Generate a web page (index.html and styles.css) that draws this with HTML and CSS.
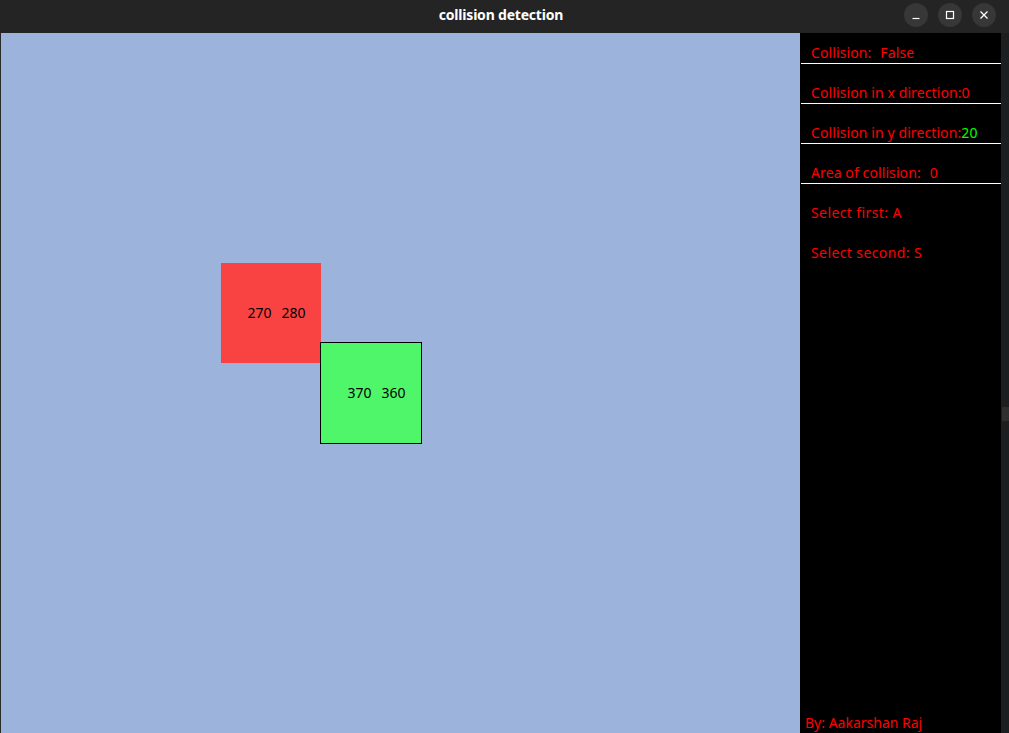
FILE: index.html
```html
<!DOCTYPE html>
<html lang="en">
<head>
<meta charset="utf-8">
<title>collision detection</title>
<link rel="stylesheet" href="styles.css">
</head>
<body>
<div class="window">
  <header class="titlebar">
    <div class="title">collision detection</div>
    <div class="controls">
      <span class="btn"><svg width="10" height="10" viewBox="0 0 10 10"><path d="M1.5 8.5h7" stroke="#fff" stroke-width="1.2"/></svg></span>
      <span class="btn"><svg width="10" height="10" viewBox="0 0 10 10"><rect x="1.5" y="1.5" width="7" height="7" fill="none" stroke="#fff" stroke-width="1.2"/></svg></span>
      <span class="btn"><svg width="10" height="10" viewBox="0 0 10 10"><path d="M1.5 1.5l7 7M8.5 1.5l-7 7" stroke="#fff" stroke-width="1.3"/></svg></span>
    </div>
  </header>
  <main class="content">
    <div class="edge"></div>
    <section class="canvas">
      <div class="box box-red"><span>270</span><span>280</span></div>
      <div class="box box-green"><span>370</span><span>360</span></div>
    </section>
    <aside class="sidebar">
      <div class="row row-first">Collision:<span class="gap"></span>False</div>
      <div class="row">Collision in x direction:0</div>
      <div class="row">Collision in y direction:<span class="green">20</span></div>
      <div class="row">Area of collision:<span class="gap"></span>0</div>
      <div class="row plain">Select first: A</div>
      <div class="row plain">Select second: S</div>
      <div class="spacer"></div>
      <div class="credit">By: Aakarshan Raj</div>
    </aside>
    <div class="strip"><div class="thumb"></div></div>
  </main>
</div>
</body>
</html>
```
FILE: styles.css
```css
* { box-sizing: border-box; }
html, body { margin: 0; padding: 0; background: #1c1d1e; }
body { width: 1009px; height: 733px; overflow: hidden; font-family: "Noto Sans", "DejaVu Sans", sans-serif; }
.window { display: flex; flex-direction: column; width: 1009px; height: 733px; }
.titlebar {
  height: 33px; background: #242424; display: flex; align-items: center; justify-content: center;
  position: relative; color: #fff;
}
.title { font-weight: 700; font-size: 14px; letter-spacing: -0.2px; margin-top: -4px; margin-right: 7px; }
.controls { position: absolute; right: 13px; top: 3px; display: flex; gap: 10px; }
.btn { width: 24px; height: 24px; border-radius: 50%; background: #373737; display: flex; align-items: center; justify-content: center; }
.content { flex: 1; display: flex; min-height: 0; }
.edge { width: 1px; background: #2a2a2a; }
.canvas { width: 799px; background: #9cb3dc; position: relative; }
.box {
  position: absolute; width: 100px; height: 100px; display: flex; align-items: center; justify-content: center;
  gap: 10px; font-size: 14px; color: #000; padding-left: 11px; padding-bottom: 2px;
}
.box-red { left: 220px; top: 230px; background: #f94343; }
.box-green { left: 319px; top: 309px; width: 102px; height: 102px; background: #50f66a; border: 1px solid #000; }
.sidebar { width: 201px; background: #000; color: #ff0000; font-size: 14px; display: flex; flex-direction: column; }
.row {
  height: 40px; display: flex; align-items: flex-end; padding: 0 0 2px 10px; line-height: 16px;
  border-bottom: 1px solid #fff; margin-left: 1px; white-space: nowrap; letter-spacing: 0.1px;
}
.row-first { height: 31px; }
.row.plain { border-bottom: none; padding-bottom: 3px; letter-spacing: 0.4px; }
.gap { display: inline-block; width: 9px; }
.green { color: #00ff00; margin-left: 0; }
.spacer { flex: 1; }
.credit { padding: 0 0 2px 5px; line-height: 16px; }
.strip { width: 8px; background: #1c1e1f; position: relative; }
.thumb { position: absolute; left: 1px; top: 374px; width: 7px; height: 14px; background: #2e2f2e; }
```
